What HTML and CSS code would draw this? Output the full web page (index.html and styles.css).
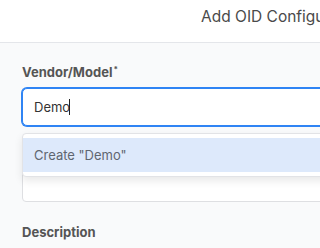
FILE: index.html
```html
<!DOCTYPE html>
<html lang="en">
<head>
  <meta charset="UTF-8">
  <meta name="viewport" content="width=device-width, initial-scale=1.0">
  <title>Add OID Configuration</title>
  <link rel="stylesheet" href="styles.css">
</head>
<body>
  <div class="modal">
    <div class="modal-header">
      <h2 class="modal-title">Add OID Configuration</h2>
    </div>
    <form class="modal-body" action="#">
      <div class="field">
        <label class="field-label" for="vendor">Vendor/Model<sup>*</sup></label>
        <div class="combo">
          <input id="vendor" class="input input-focus" type="text" value="Demo">
          <span class="caret"></span>
          <ul class="menu">
            <li class="menu-item active">Create "Demo"</li>
          </ul>
        </div>
      </div>
      <div class="field field-plain">
        <input class="input" type="text">
      </div>
      <div class="field">
        <label class="field-label" for="desc">Description</label>
      </div>
    </form>
  </div>
</body>
</html>
```

FILE: styles.css
```css
/* Add OID Configuration modal */
html, body {
  margin: 0;
  padding: 0;
}

body {
  width: 320px;
  height: 248px;
  overflow: hidden;
  background-color: #f9fafb;
  font-family: Inter, "Noto Sans", sans-serif;
}

.modal {
  width: 600px;
}

.modal-header {
  height: 43px;
  padding-top: 7px;
  box-sizing: border-box;
  background-color: #fff;
  border-bottom: 1px solid #e4e6ea;
  padding-left: 201px;
}

.modal-title {
  margin: 0;
  font-size: 15.5px;
  font-weight: 400;
  line-height: 20px;
  color: #4a4a4a;
  white-space: nowrap;
}

.modal-body {
  padding: 21px 22px 0;
  margin: 0;
}

.field-label {
  display: block;
  font-size: 13px;
  font-weight: 700;
  line-height: 16px;
  color: #555;
  margin-bottom: 8px;
}

.field-label sup {
  font-size: 8px;
  line-height: 0;
  vertical-align: 5px;
  margin-left: 1px;
}

.combo {
  position: relative;
}

.input {
  display: block;
  width: 100%;
  height: 38px;
  box-sizing: border-box;
  padding: 0 11px;
  border: 1px solid #dedfe2;
  border-radius: 4px;
  background-color: #fff;
  font-family: inherit;
  font-size: 13px;
  color: #333;
  outline: none;
}

.input-focus {
  border-color: #2f84f4;
  box-shadow: 0 0 0 1px #2f84f4;
  border-radius: 5px;
}

/* fake text cursor after the typed value */
.caret {
  position: absolute;
  left: 47px;
  top: 11px;
  width: 1px;
  height: 16px;
  background-color: #222;
}

.menu {
  position: absolute;
  top: 45px;
  left: 0;
  right: 0;
  margin: 0;
  padding: 4px 0;
  list-style: none;
  background-color: #fff;
  border: 1px solid #e2e3e6;
  border-radius: 4px;
  box-shadow: 0 4px 8px rgba(0, 0, 0, 0.09);
  z-index: 2;
}

.menu-item {
  height: 34px;
  line-height: 35px;
  padding-left: 11px;
  font-size: 13px;
  color: #5f6670;
}

.menu-item.active {
  background-color: #dde9fb;
}

.field-plain {
  margin-top: 38px;
}

.field-plain + .field {
  margin-top: 22px;
}
```
